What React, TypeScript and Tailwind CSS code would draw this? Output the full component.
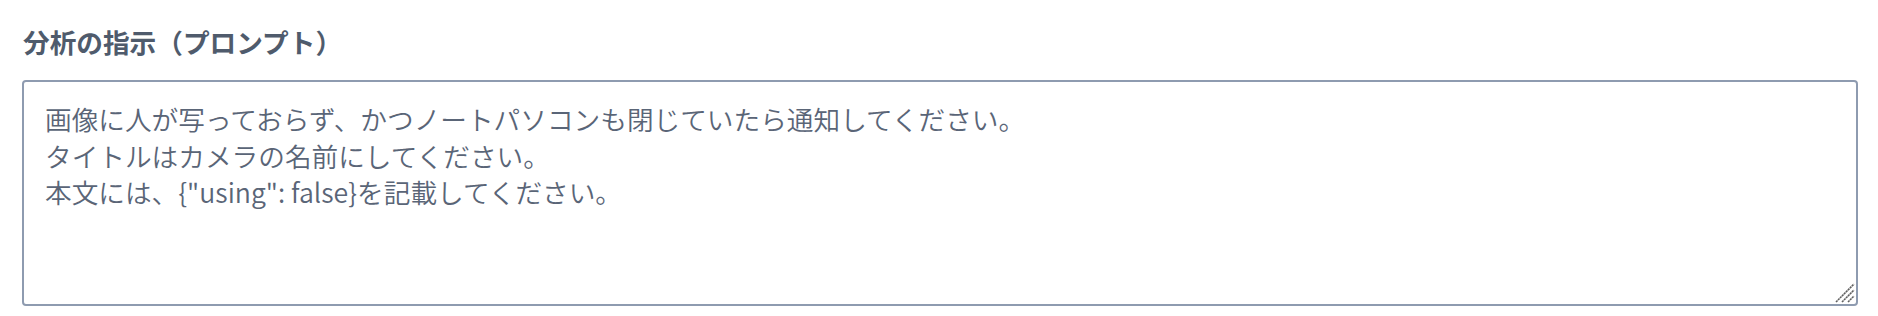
import React from "react";

export default function App() {
  const text =
    "画像に人が写っておらず、かつノートパソコンも閉じていたら通知してください。\nタイトルはカメラの名前にしてください。\n本文には、{\"using\": false}を記載してください。";
  return (
    <div className="w-[1878px] h-[316px] bg-white px-[22px] pt-[23px] [font-family:'Noto_Sans_CJK_JP','Noto_Sans',sans-serif]">
      <label className="block text-[26.67px] leading-[37px] font-bold text-[#4f5b6c] ml-px">
        分析の指示（プロンプト）
      </label>
      <div className="relative mt-[20px] w-[1836px]">
        <textarea
          className="block w-full h-[226px] resize-none border-2 border-[#8e9bb0] rounded-[4px] px-[21px] pt-[19px] text-[26.67px] leading-[36.5px] font-[350] text-[#5a6577] outline-none"
          defaultValue={text}
        />
        <svg
          className="absolute right-[3px] bottom-[3px]"
          width="20"
          height="20"
          viewBox="0 0 20 20"
        >
          <line x1="1" y1="19" x2="19" y2="1" stroke="#5f5f5f" strokeWidth="1.6" strokeDasharray="2.2 0.6" />
          <line x1="7" y1="19" x2="19" y2="7" stroke="#5f5f5f" strokeWidth="1.6" strokeDasharray="2.2 0.6" />
          <line x1="13" y1="19" x2="19" y2="13" stroke="#5f5f5f" strokeWidth="1.6" strokeDasharray="2.2 0.6" />
        </svg>
      </div>
    </div>
  );
}
